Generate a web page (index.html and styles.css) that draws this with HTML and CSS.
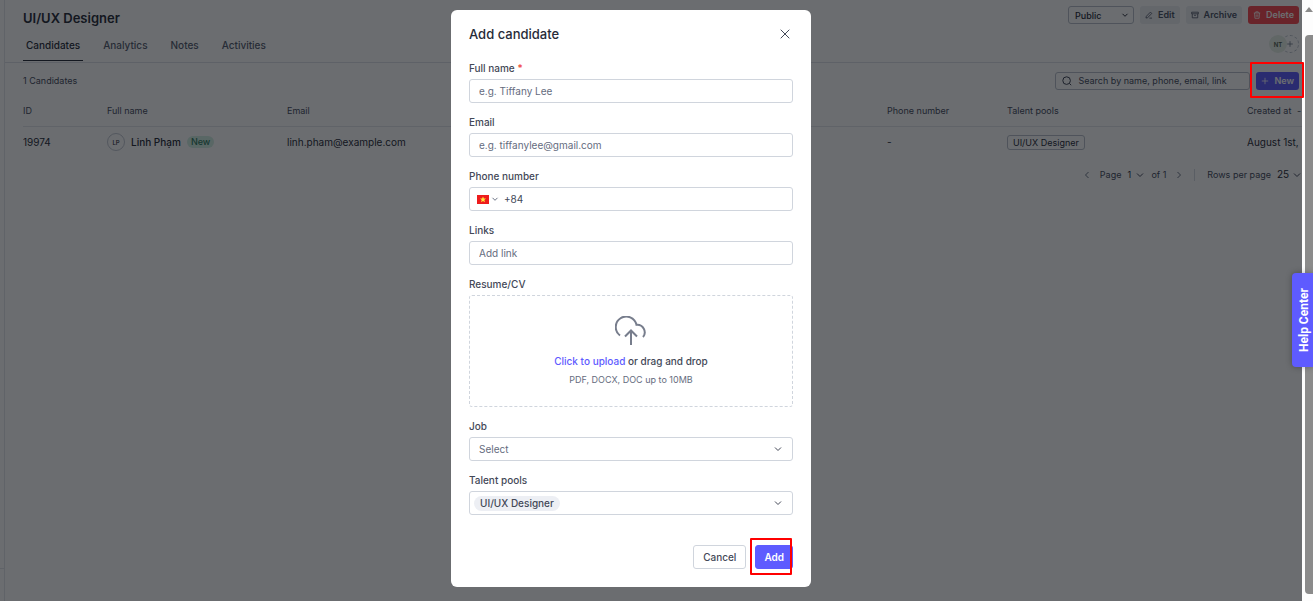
FILE: index.html
```
<!DOCTYPE html>
<html lang="en">
<head>
    <meta charset="UTF-8">
    <meta name="viewport" content="width=device-width, initial-scale=1.0">
    <title>UI/UX Designer - Candidates</title>
    <link rel="stylesheet" href="styles.css">
</head>
<body>
    <div class="window">
        <div class="app">
            <div class="sidebar"><div class="sidebar-top"></div></div>
            <main class="main">
                <header class="topbar">
                    <h1>UI/UX Designer</h1>
                    <div class="actions">
                        <div class="select-box">
                            <select class="visibility" aria-label="Visibility"><option>Public</option></select>
                            <svg class="chevron" viewBox="0 0 8 8"><path d="M1.5 2.8 4 5.3l2.5-2.5"/></svg>
                        </div>
                        <button class="btn-sm">
                            <svg viewBox="0 0 10 10"><path d="M1.2 8.8l.5-2.2L6.8 1.4l1.7 1.7-5.2 5.2zM5.5 8.9h3.3"/></svg>Edit
                        </button>
                        <button class="btn-sm">
                            <svg viewBox="0 0 10 10"><path d="M.8 1.5h8.4v2H.8zM1.6 3.5v5h6.8v-5M3.8 5.4h2.4"/></svg>Archive
                        </button>
                        <button class="btn-sm danger">
                            <svg viewBox="0 0 10 10"><path d="M1 2.5h8M3.5 2.5V1h3v1.5M1.9 2.5l.5 6.6h5.2l.5-6.6M4 4.3v3M6 4.3v3"/></svg>Delete
                        </button>
                    </div>
                </header>

                <div class="tabs-row">
                    <nav class="tabs">
                        <a href="#" class="tab active">Candidates</a>
                        <a href="#" class="tab">Analytics</a>
                        <a href="#" class="tab">Notes</a>
                        <a href="#" class="tab">Activities</a>
                    </nav>
                    <div class="members">
                        <span class="member">NT</span>
                        <button class="member-add" aria-label="Add member">
                            <svg viewBox="0 0 10 10"><path d="M5 1.5v7M1.5 5h7"/></svg>
                        </button>
                    </div>
                </div>

                <div class="toolbar">
                    <span class="count">1 Candidates</span>
                    <div class="toolbar-right">
                        <label class="search">
                            <svg viewBox="0 0 10 10"><circle cx="4.6" cy="4.6" r="3.8"/><path d="M7.4 7.4l1.8 1.8"/></svg>
                            <input type="text" placeholder="Search by name, phone, email, link" aria-label="Search">
                        </label>
                        <button class="btn-sm primary">
                            <svg viewBox="0 0 10 10"><path d="M5 1v8M1 5h8"/></svg>New
                        </button>
                    </div>
                </div>

                <table class="candidates">
                    <thead>
                        <tr>
                            <th class="col-id">ID</th>
                            <th class="col-name">Full name</th>
                            <th>Email</th>
                            <th class="col-phone">Phone number</th>
                            <th class="col-pools">Talent pools</th>
                            <th class="col-created">Created at <span class="sort">-</span></th>
                        </tr>
                    </thead>
                    <tbody>
                        <tr>
                            <td>19974</td>
                            <td>
                                <div class="person">
                                    <span class="avatar">LP</span>
                                    <span class="person-name">Linh Phạm</span>
                                    <span class="badge">New</span>
                                </div>
                            </td>
                            <td>linh.pham@example.com</td>
                            <td>-</td>
                            <td><span class="pool">UI/UX Designer</span></td>
                            <td>August 1st,</td>
                        </tr>
                    </tbody>
                </table>

                <div class="pagination">
                    <button class="page-btn" aria-label="Previous page"><svg class="chevron" viewBox="0 0 8 8"><path d="M5.5 1 2.5 4l3 3"/></svg></button>
                    <label for="page">Page</label>
                    <div class="select-box plain">
                        <select id="page" class="page-select"><option>1</option></select>
                        <svg class="chevron" viewBox="0 0 8 8"><path d="M1 2.5l3 3 3-3"/></svg>
                    </div>
                    <span>of 1</span>
                    <button class="page-btn" aria-label="Next page"><svg class="chevron" viewBox="0 0 8 8"><path d="M2.5 1l3 3-3 3"/></svg></button>
                    <span class="divider"></span>
                    <label for="rows">Rows per page</label>
                    <div class="select-box plain">
                        <select id="rows" class="rows-select"><option>25</option></select>
                        <svg class="chevron" viewBox="0 0 8 8"><path d="M1 2.5l3 3 3-3"/></svg>
                    </div>
                </div>
            </main>

            <div class="overlay">
                <form class="modal" role="dialog" aria-labelledby="modalTitle">
                    <div class="modal-header">
                        <h2 id="modalTitle">Add candidate</h2>
                        <button type="button" class="close" aria-label="Close">
                            <svg viewBox="0 0 10 10"><path d="M.7.7l8.6 8.6M9.3.7L.7 9.3"/></svg>
                        </button>
                    </div>

                    <div class="fields">
                        <div class="field">
                            <label for="fullName">Full name <span class="required">*</span></label>
                            <input id="fullName" class="control" type="text" placeholder="e.g. Tiffany Lee">
                        </div>
                        <div class="field">
                            <label for="email">Email</label>
                            <input id="email" class="control" type="email" placeholder="e.g. tiffanylee@gmail.com">
                        </div>
                        <div class="field">
                            <label for="phone">Phone number</label>
                            <div class="control phone">
                                <button type="button" class="country" aria-label="Country">
                                    <svg class="flag" viewBox="0 0 12 9"><path fill="#ee1c1c" d="M0 0h12v9H0z"/><path fill="#ffe83b" d="M6 1.5l.9 2.1H9L7.3 5l.7 2.200L6 5.900 4 7.200 4.700 5 3 3.600h2.100z"/></svg>
                                    <svg class="chevron" viewBox="0 0 8 8"><path d="M1.5 2.8 4 5.3l2.5-2.5"/></svg>
                                </button>
                                <input id="phone" type="tel" value="+84">
                            </div>
                        </div>
                        <div class="field">
                            <label for="links">Links</label>
                            <input id="links" class="control" type="text" placeholder="Add link">
                        </div>
                        <div class="field">
                            <span class="label">Resume/CV</span>
                            <div class="dropzone">
                                <svg class="cloud" viewBox="0 0 32 30"><path d="M5 19.500A10.500 10.500 0 1 1 21.500 8.800a7.500 7.500 0 0 1 6.500 12.200M16 29V14.500M10 20.500l6-6 6 6"/></svg>
                                <p class="drop-title"><a href="#">Click to upload</a> or drag and drop</p>
                                <p class="drop-hint">PDF, DOCX, DOC up to 10MB</p>
                            </div>
                        </div>
                        <div class="field">
                            <label for="job">Job</label>
                            <div class="select-box">
                                <select id="job" class="control"><option>Select</option></select>
                                <svg class="chevron" viewBox="0 0 8 8"><path d="M1 2.5l3 3 3-3"/></svg>
                            </div>
                        </div>
                        <div class="field">
                            <label for="pools">Talent pools</label>
                            <button type="button" id="pools" class="control pools">
                                <span class="chip">UI/UX Designer</span>
                                <svg class="chevron" viewBox="0 0 8 8"><path d="M1 2.5l3 3 3-3"/></svg>
                            </button>
                        </div>
                    </div>

                    <div class="modal-footer">
                        <button type="button" class="btn">Cancel</button>
                        <div class="marked">
                            <button type="submit" class="btn btn-add">Add</button>
                            <div class="highlight highlight-add"></div>
                        </div>
                    </div>
                </form>
            </div>

            <div class="highlight highlight-new"></div>
        </div>

        <div class="scrollbar">
            <div class="scroll-arrow"></div>
            <div class="scroll-thumb"></div>
        </div>
        <button class="help">Help Center</button>
    </div>
</body>
</html>
```
FILE: styles.css
```
* {
    box-sizing: border-box;
}

body {
    margin: 0;
    font-family: Inter, "Liberation Sans", sans-serif;
    font-size: 10px;
    line-height: 15px;
    color: #272b38;
    background: #fff;
}

h1, h2, p {
    margin: 0;
}

a {
    text-decoration: none;
}

button, input, select {
    font: inherit;
    color: inherit;
    margin: 0;
    padding: 0;
    border: none;
    background: none;
    outline: none;
}

svg {
    display: block;
    flex: none;
    width: 10px;
    height: 10px;
    fill: none;
    stroke: currentColor;
    stroke-width: 1;
}

.chevron {
    width: 8px;
    height: 8px;
}

.window {
    position: relative;
    display: flex;
    min-height: 100vh;
    overflow: hidden;
}

.app {
    position: relative;
    flex: 1;
    min-width: 0;
    display: flex;
}

/* left edge of the navigation */
.sidebar {
    flex: none;
    width: 5px;
    display: flex;
    flex-direction: column;
    padding-bottom: 32px;
    border-right: 1px solid #e4e6eb;
}

.sidebar-top {
    flex: 1;
    border-bottom: 1px solid #e4e6eb;
}

.main {
    flex: 1;
    min-width: 0;
    overflow: hidden;
}

.topbar {
    display: flex;
    justify-content: space-between;
    align-items: flex-start;
    padding: 6px 3px 0 18px;
}

h1 {
    font-size: 13px;
    line-height: 24px;
    font-weight: 600;
}

.actions {
    display: flex;
    gap: 6px;
}

.select-box {
    position: relative;
    display: flex;
    align-items: center;
}

.select-box select {
    appearance: none;
}

.select-box .chevron {
    position: absolute;
    right: 5px;
    pointer-events: none;
}

.visibility {
    width: 66px;
    height: 18px;
    padding-left: 6px;
    border: 1px solid #b8bfca;
    border-radius: 3px;
    font-size: 9px;
    font-weight: 500;
}

.btn-sm {
    display: flex;
    align-items: center;
    gap: 5px;
    height: 18px;
    padding: 0 5px;
    border-radius: 3px;
    font-size: 9px;
    line-height: 14px;
    font-weight: 600;
    color: #4a5163;
    background: #edeff3;
}

.btn-sm svg {
    width: 8px;
    height: 8px;
}

.btn-sm.danger {
    color: #fff;
    background: #fb4a50;
}

.btn-sm.primary {
    color: #fff;
    background: #5e5bff;
}

.tabs-row {
    display: flex;
    justify-content: space-between;
    align-items: center;
    height: 33px;
    padding: 0 3px 0 18px;
    border-bottom: 1px solid #dfe2e8;
}

.tabs {
    display: flex;
    align-items: flex-start;
    align-self: stretch;
    gap: 17px;
}

.tab {
    padding: 8px 3px 7px;
    font-weight: 500;
    color: #555d70;
}

.tab.active {
    color: #272b38;
    border-bottom: 1px solid #272b38;
}

.members {
    display: flex;
    align-items: center;
    margin-bottom: 4px;
}

.member, .member-add {
    display: flex;
    align-items: center;
    justify-content: center;
    width: 18px;
    height: 18px;
    border-radius: 50%;
}

.member {
    position: relative;
    font-size: 6px;
    font-weight: 600;
    color: #4a5a4c;
    background: #e6efe6;
}

.member-add {
    margin-left: -6px;
    border: 1px dashed #b8bfca;
    color: #6b7385;
}

.member-add svg {
    width: 8px;
    height: 8px;
}

.toolbar {
    display: flex;
    justify-content: space-between;
    align-items: center;
    padding: 9px 3px 8px 18px;
}

.toolbar-right {
    display: flex;
    gap: 6px;
}

.count {
    font-size: 9px;
    line-height: 14px;
    color: #454c5e;
}

.search {
    display: flex;
    align-items: center;
    gap: 6px;
    width: 195px;
    height: 18px;
    padding: 0 6px;
    border: 1px solid #b8bfca;
    border-radius: 3px;
    color: #3d4354;
}

.search input {
    flex: 1;
    min-width: 0;
    font-size: 9px;
    line-height: 14px;
}

.search input::placeholder {
    color: #454c5e;
}

.candidates {
    width: 100%;
    padding-left: 18px;
    table-layout: fixed;
    border-spacing: 0;
}

.candidates th, .candidates td {
    padding: 0;
    text-align: left;
    white-space: nowrap;
    overflow: hidden;
}

.candidates th {
    height: 29px;
    padding-bottom: 2px;
    font-size: 9px;
    line-height: 14px;
    font-weight: 400;
    color: #454c5e;
    border-bottom: 1px solid #e4e6eb;
}

.candidates td {
    height: 30px;
}

.col-id {
    width: 84px;
}

.col-name {
    width: 180px;
}

.col-phone {
    width: 120px;
}

.col-pools {
    width: 240px;
}

.col-created {
    width: 55px;
}

.sort {
    margin-left: 3px;
}

.person {
    display: flex;
    align-items: center;
    gap: 6px;
}

.avatar {
    display: flex;
    align-items: center;
    justify-content: center;
    width: 18px;
    height: 18px;
    border: 1px solid #c3c8d2;
    border-radius: 50%;
    font-size: 6px;
    font-weight: 500;
}

.person-name {
    font-weight: 500;
}

.badge {
    padding: 0 4px;
    border-radius: 6px;
    font-size: 9px;
    line-height: 12px;
    font-weight: 500;
    color: #2f7a60;
    background: #d3efe3;
}

.pool {
    display: inline-block;
    padding: 0 5px;
    border: 1px solid #b8bfca;
    border-radius: 3px;
    font-size: 9px;
    line-height: 13px;
}

.pagination {
    display: flex;
    justify-content: flex-end;
    align-items: center;
    padding: 10px 0;
    font-size: 9px;
    color: #454c5e;
}

.pagination label {
    margin: 0 6px 0 9px;
}

.pagination select {
    color: #272b38;
}

.page-select {
    width: 18px;
}

.rows-select {
    width: 25px;
    font-size: 10px;
}

.plain .chevron {
    right: 1px;
}

.pagination span {
    margin-left: 6px;
}

.page-btn {
    color: #6b7385;
}

.page-btn + .divider {
    width: 1px;
    height: 12px;
    margin: 0 3px 0 11px;
    background: #d5d9e0;
}

span + .page-btn {
    margin-left: 9px;
}

.overlay {
    position: absolute;
    inset: 0;
    padding: 10px 40px 14px 0;
    background: rgba(8, 12, 17, 0.6);
}

.modal {
    width: 360px;
    margin: 0 auto;
    padding: 16px 18px 18px;
    border-radius: 6px;
    color: #434857;
    background: #fff;
}

.modal-header {
    display: flex;
    justify-content: space-between;
    align-items: center;
    margin-bottom: 19px;
}

h2 {
    font-size: 13px;
    line-height: 16px;
    font-weight: 500;
    color: #272b38;
}

.close {
    padding: 3px;
}

.fields {
    display: flex;
    flex-direction: column;
    gap: 12px;
}

.field {
    display: flex;
    flex-direction: column;
    gap: 3px;
}

.field > label, .label {
    font-weight: 500;
}

.required {
    color: #f04438;
}

.control {
    width: 100%;
    height: 24px;
    padding: 0 9px;
    border: 1px solid #d0d5dd;
    border-radius: 3px;
}

.control::placeholder {
    color: #656c7e;
}

.phone {
    display: flex;
    align-items: center;
    gap: 5px;
    padding: 0 7px;
}

.phone input {
    flex: 1;
    min-width: 0;
}

.country {
    display: flex;
    align-items: center;
    gap: 2px;
    color: #6b7385;
}

.flag {
    width: 12px;
    height: 9px;
    stroke: none;
}

.dropzone {
    display: flex;
    flex-direction: column;
    align-items: center;
    padding: 20px 0 19px;
    border: 1px dashed #d0d5dd;
    border-radius: 3px;
}

.cloud {
    width: 32px;
    height: 30px;
    color: #777d8c;
    stroke-width: 2;
}

.drop-title {
    margin-top: 8px;
    font-weight: 500;
}

.drop-title a {
    color: #5e5bff;
}

.drop-hint {
    margin-top: 4px;
    font-size: 9px;
    line-height: 14px;
    color: #656c7e;
}

.select-box .control {
    color: #656c7e;
}

.select-box .control + .chevron {
    right: 11px;
}

.pools {
    display: flex;
    align-items: center;
    justify-content: space-between;
    padding: 0 10px 0 4px;
}

.chip {
    padding: 0 6px;
    border-radius: 8px;
    font-weight: 500;
    background: #edeff4;
}

.modal-footer {
    display: flex;
    justify-content: flex-end;
    gap: 9px;
    margin-top: 30px;
}

.btn {
    height: 24px;
    padding: 0 9px;
    border: 1px solid #d0d5dd;
    border-radius: 3px;
    font-weight: 500;
}

.btn-add {
    padding: 0 8px;
    border-color: #5e5bff;
    font-weight: 600;
    color: #fff;
    background: #5e5bff;
}

.marked {
    position: relative;
}

.highlight {
    position: absolute;
    border: 2px solid #f00;
    border-radius: 1px;
    pointer-events: none;
}

.highlight-add {
    inset: -7px 1px -6px -5px;
}

.highlight-new {
    top: 62px;
    right: -2px;
    width: 54px;
    height: 36px;
    z-index: 1;
}

.scrollbar {
    flex: none;
    width: 11px;
    display: flex;
    flex-direction: column;
    padding: 7px 0 7px 3px;
    background: #fdfdfd;
}

.scroll-arrow {
    width: 8px;
    height: 5px;
    margin-bottom: 23px;
    background: #8b8b8b;
    clip-path: polygon(0 100%, 50% 0, 100% 100%);
}

.scroll-thumb {
    flex: 1;
    border-radius: 4px 0 0 4px;
    background: #8b8b8b;
}

.help {
    position: absolute;
    top: 273px;
    right: 0;
    width: 21px;
    height: 94px;
    padding-right: 4px;
    border-radius: 0 4px 4px 0;
    font-family: Roboto, sans-serif;
    font-size: 12px;
    font-weight: 700;
    writing-mode: vertical-rl;
    transform: rotate(180deg);
    color: #fff;
    background: #5e5bff;
    box-shadow: 0 0 6px rgba(0, 0, 0, 0.3);
}
```
